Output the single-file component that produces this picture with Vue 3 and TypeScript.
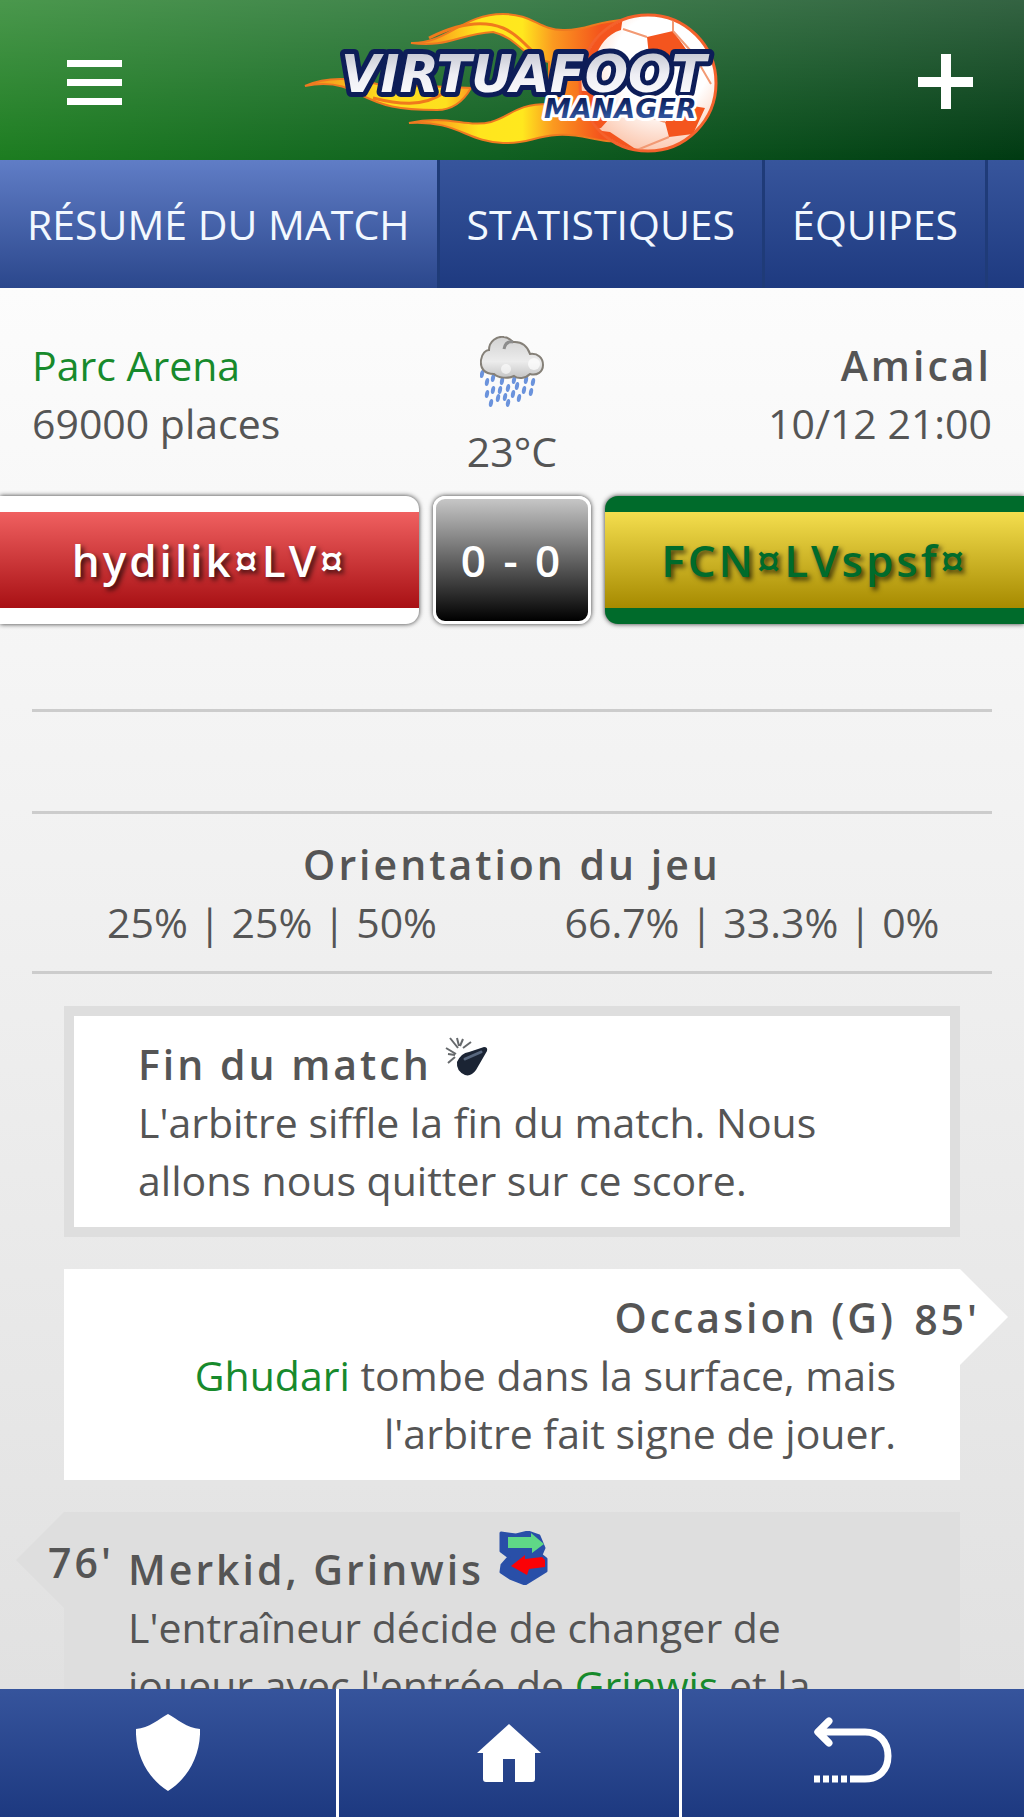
<script setup lang="ts">
interface Tab {
  label: string
  active: boolean
}

const tabs: Tab[] = [
  { label: 'RÉSUMÉ DU MATCH', active: true },
  { label: 'STATISTIQUES', active: false },
  { label: 'ÉQUIPES', active: false },
]

const orientation: string[] = ['25% | 25% | 50%', '66.7% | 33.3% | 0%']

const drops: [number, number][] = [
  [2, 38], [7, 46], [13, 42], [22, 45], [34, 44], [46, 44], [53, 46],
  [13, 54], [20, 54], [28, 52], [37, 50], [44, 54], [51, 56], [7, 58],
  [18, 62], [25, 61], [33, 58], [39, 62], [11, 67], [28, 67],
]
</script>

<template>
  <div class="app">
    <header class="topbar">
      <button class="icon-button menu" type="button" aria-label="Menu">
        <svg width="56" height="56" viewBox="0 0 56 56" fill="#fff">
          <path d="M0 6h55v7H0zM0 25h55v7H0zM0 44h55v7H0z" />
        </svg>
      </button>
      <svg class="logo" width="450" height="160" viewBox="-3 0 450 160" role="img" aria-label="Virtuafoot Manager">
        <defs>
          <linearGradient id="flame" x1="0" x2="1">
            <stop offset="0" stop-color="#f08a1c" />
            <stop offset=".15" stop-color="#fba81c" />
            <stop offset=".32" stop-color="#ffe51e" />
            <stop offset=".52" stop-color="#ffe81e" />
            <stop offset=".66" stop-color="#fb9a20" />
            <stop offset=".88" stop-color="#f4541c" />
          </linearGradient>
          <linearGradient id="tail" x1="0" x2="1">
            <stop offset="0" stop-color="#f08a1c" />
            <stop offset=".45" stop-color="#ffdc1e" />
            <stop offset=".85" stop-color="#fde01e" />
            <stop offset="1" stop-color="#fb9a20" />
          </linearGradient>
          <linearGradient id="steel" x1="0" y1="0" x2="0" y2="1">
            <stop offset="0" stop-color="#b9bcc8" />
            <stop offset=".5" stop-color="#eeeef4" />
            <stop offset="1" stop-color="#fff" />
          </linearGradient>
          <linearGradient id="navy" x1="0" y1="0" x2="0" y2="1">
            <stop offset=".2" stop-color="#0c1f5c" />
            <stop offset="1" stop-color="#3d68b4" />
          </linearGradient>
          <radialGradient id="ball" cx=".6" cy=".35" r=".7">
            <stop offset=".5" stop-color="#fff" />
            <stop offset="1" stop-color="#fbc0a4" />
          </radialGradient>
          <clipPath id="ballClip"><circle cx="358" cy="83" r="67" /></clipPath>
        </defs>
        <g stroke="#ee7a20" stroke-width="2">
          <path d="M121 43C157 44 172 14 213 14C243 14 249 30 273 30C299 31 305 20 337 20L337 140C307 145 297 133 267 135C242 137 237 144 213 143C177 142 167 120 119 123C157 114 177 128 201 122C222 116 225 104 259 104L259 62C232 58 229 38 203 32C169 34 157 48 121 43Z" fill="url(#flame)" />
          <path d="M15 86C37 76 63 78 87 84L181 88C173 102 163 110 147 110C107 110 93 106 69 94C53 84 35 82 15 86Z" fill="url(#tail)" />
          <path d="M190 58H202L198 76H184Z" fill="#fdb81e" />
        </g>
        <path d="M139 38C167 24 193 20 213 28C233 36 237 52 253 56M83 98C107 104 133 108 155 92" fill="none" stroke="#f07a1c" stroke-width="3" />
        <circle cx="358" cy="83" r="68" fill="url(#ball)" stroke="#f4622c" stroke-width="3" />
        <g clip-path="url(#ballClip)">
          <path d="M287 26C303 20 317 18 333 16L331 30C317 34 309 46 305 58L280 60ZM357 37L383 31L401 56L359 56ZM281 90L309 92L319 119L311 128L277 132ZM375 122L397 105L415 108L403 134L379 137ZM290 128L320 132L347 150L330 156Z" fill="#f4551e" />
          <path d="M333 29L357 37M383 31V20M383 31L409 60M359 56L347 70M319 119Q347 110 375 122M379 137L347 150M407 60L421 84" fill="none" stroke="#f29a74" stroke-width="2" />
        </g>
        <g font-family="'DejaVu Sans', sans-serif" font-weight="700" font-style="italic" stroke-linejoin="round" paint-order="stroke">
          <text x="51" y="92" font-size="51" fill="url(#steel)" stroke="#0d1d58" stroke-width="10">VIRTUAFOOT</text>
          <text x="254" y="118" font-size="27" fill="url(#navy)" stroke="#fff" stroke-width="6">MANAGER</text>
        </g>
      </svg>
      <button class="icon-button plus" type="button" aria-label="Ajouter">
        <svg width="56" height="56" viewBox="0 0 56 56" fill="#fff">
          <path d="M23 0h10v23h22v10H33v22H23V33H0V23h23z" />
        </svg>
      </button>
    </header>

    <nav class="tabs" aria-label="Match">
      <a v-for="tab in tabs" :key="tab.label" href="#" class="tab" :class="{ active: tab.active }">{{ tab.label }}</a>
    </nav>

    <main class="content">
      <section class="info">
        <div>
          <a href="#">Parc Arena</a>
          <div>69000 places</div>
        </div>
        <div class="weather">
          <svg width="64" height="76" viewBox="0 0 64 76" aria-hidden="true">
            <defs>
              <linearGradient id="cloud" x1="0" y1="0" x2="0" y2="1">
                <stop offset="0" stop-color="#d2d2d2" />
                <stop offset=".6" stop-color="#ececec" />
                <stop offset="1" stop-color="#c4c4c4" />
              </linearGradient>
            </defs>
            <ellipse v-for="([x, y], i) in drops" :key="i" :cx="x" :cy="y" rx="2" ry="4" fill="#6b93dc" :transform="`rotate(12 ${x} ${y})`" />
            <path d="M14 38C4 38 0 32 1 24C2 17 6 14 9 14C9 5 17 0 24 1C28 1 31 4 33 6C42 5 48 11 50 18C58 17 63 22 63 29C63 36 57 40 50 38C45 43 38 43 34 40C28 43 18 42 14 38Z" fill="url(#cloud)" stroke="#858078" stroke-width="2" />
            <path d="M24 13C25 8 28 5 33 6" fill="none" stroke="#8d8d8d" stroke-width="3" />
            <circle cx="54" cy="28" r="6" fill="#fff" opacity=".7" />
            <circle cx="26" cy="33" r="5" fill="#fff" opacity=".6" />
          </svg>
          <div>23°C</div>
        </div>
        <div class="right">
          <h3>Amical</h3>
          <div>10/12 21:00</div>
        </div>
      </section>

      <section class="scoreboard">
        <div class="team home"><span>hydilik¤LV¤</span></div>
        <div class="score">0 - 0</div>
        <div class="team away"><span>FCN¤LVspsf¤</span></div>
      </section>

      <section class="panel scorers"></section>
      <section class="panel bookings"></section>
      <section class="panel orientation">
        <h3>Orientation du jeu</h3>
        <div class="halves">
          <span v-for="value in orientation" :key="value">{{ value }}</span>
        </div>
      </section>

      <section class="feed">
        <article class="event framed">
          <h3>Fin du match
            <svg width="44" height="45" viewBox="0 0 44 45" aria-hidden="true">
              <path d="M12 27Q16 18 24 17L39 12Q43 12 42 16L31 35Q26 42 20 40Q11 36 12 27Z" fill="#1b2434" />
              <path d="M20 24L36 17" stroke="#58677e" stroke-width="3" stroke-linecap="round" />
              <path d="M5 3L13 13M12 3L14 11M18 4L15 11M26 7L18 13M1 13L11 19M3 19L10 20M3 28L10 22" stroke="#66696c" stroke-width="2" fill="none" />
            </svg>
          </h3>
          <p>L'arbitre siffle la fin du match. Nous allons nous quitter sur ce score.</p>
        </article>

        <article class="event away-event">
          <span class="minute">85'</span>
          <h3>Occasion (G)</h3>
          <p><a href="#">Ghudari</a> tombe dans la surface, mais l'arbitre fait signe de jouer.</p>
        </article>

        <article class="event home-event">
          <span class="minute">76'</span>
          <h3>Merkid, Grinwis
            <svg width="50" height="54" viewBox="0 0 50 54" aria-hidden="true">
              <path d="M3 2L18 4L30 1L41 5L46 17L43 24L48 28V40L40 45L27 53L12 47L3 41L4 34L11 26L3 20Z" fill="#294fa8" stroke="#294fa8" stroke-width="3" stroke-linejoin="round" />
              <path d="M10 6H33V2L46 13L34 22V17H10Z" fill="#5fd887" />
              <path d="M13 35L27 24V28L44 26L47 29V36L31 38L29 44Z" fill="#fb0207" />
            </svg>
          </h3>
          <p>L'entraîneur décide de changer de joueur avec l'entrée de <a href="#">Grinwis</a> et la</p>
        </article>
      </section>
    </main>

    <footer class="bottombar">
      <a href="#" aria-label="Club">
        <svg width="64" height="78" viewBox="0 0 64 78" fill="#fff">
          <path d="M32 0C41 5 51 14 64 15C65 43 50 66 32 77C14 66-1 43 0 15C13 14 23 5 32 0Z" />
        </svg>
      </a>
      <a href="#" aria-label="Accueil">
        <svg width="64" height="58" viewBox="0 0 64 58" fill="#fff">
          <path d="M32 0L64 29H58V55Q58 58 55 58H38V35H26V58H9Q6 58 6 55V29H0Z" />
        </svg>
      </a>
      <a href="#" aria-label="Retour">
        <svg width="78" height="72" viewBox="0 0 78 72" fill="none" stroke="#fff" stroke-width="7">
          <path d="M15 4L4 15L15 26M4 15H51C65 15 74 25 74 39S65 62 51 62H36" stroke-linejoin="round" />
          <path d="M15 4L4 15L15 26" stroke-linecap="round" stroke-linejoin="round" />
          <path d="M0 62H36" stroke-dasharray="6 3" />
        </svg>
      </a>
    </footer>
  </div>
</template>

<style>
body {
  margin: 0;
}
</style>

<style scoped>
* {
  box-sizing: border-box;
}

.app {
  display: flex;
  flex-direction: column;
  height: 100vh;
  overflow: hidden;
  font: 400 41px/58px "Open Sans", "Noto Sans", sans-serif;
  color: #555;
}

a {
  color: #178a2c;
  text-decoration: none;
}

h3,
p {
  margin: 0;
}

h3 {
  font-size: 41px;
  font-weight: 600;
  line-height: 58px;
  letter-spacing: 3px;
}

.topbar {
  display: grid;
  flex: none;
  grid-template-columns: 1fr auto 1fr;
  align-items: center;
  height: 160px;
  background:
    linear-gradient(rgba(255, 255, 255, 0.2), rgba(255, 255, 255, 0)),
    linear-gradient(100deg, #1d7e20, #0f5f20 50%, #003a12);
}

.icon-button {
  padding: 20px 16px 16px;
  border: 0;
  background: none;
  line-height: 0;
}

.menu {
  justify-self: start;
  margin-left: 51px;
}

.plus {
  justify-self: end;
  margin-right: 34px;
}

.tabs {
  display: flex;
  flex: none;
  height: 128px;
  overflow: hidden;
  background: linear-gradient(#37559c, #1e3a80);
}

.tab {
  flex: none;
  padding: 0 27px;
  border-right: 3px solid #1f3b78;
  line-height: 128px;
  color: #f2f8ff;
}

.tab.active {
  background: linear-gradient(#607dc6, #2b478c);
}

.content {
  flex: 1;
  min-height: 0;
  padding-top: 48px;
  overflow: hidden;
  background: linear-gradient(#fcfcfc, #e1e1e1);
}

.info {
  display: grid;
  grid-template-columns: 1fr auto 1fr;
  padding: 0 32px 16px;
}

.weather {
  text-align: center;
}

.weather svg {
  display: block;
  margin: 0 auto 10px;
}

.right {
  text-align: right;
}

.scoreboard {
  display: grid;
  grid-template-columns: 1fr 158px 1fr;
  gap: 14px;
  font-size: 44px;
  font-weight: 600;
  letter-spacing: 3px;
  text-align: center;
}

.team {
  padding: 16px 0;
  box-shadow: 0 0 5px rgba(0, 0, 0, 0.8);
}

.team span {
  display: block;
  line-height: 96px;
  text-shadow: 3px 3px 5px rgba(0, 0, 0, 0.7);
}

.home {
  border-radius: 0 13px 13px 0;
  background: #fff;
  color: #fff;
}

.home span {
  background: linear-gradient(#f06060, #a81014);
}

.away {
  border-radius: 13px 0 0 13px;
  background: #006b2b;
  color: #006b2b;
}

.away span {
  background: linear-gradient(#f4de4e, #a68a00);
}

.score {
  border: 3px solid #fff;
  border-radius: 12px;
  background: linear-gradient(#c6c6c6, #000);
  box-shadow: 0 0 5px rgba(0, 0, 0, 0.8);
  color: #fff;
  line-height: 122px;
}

.panel {
  margin: 0 32px;
  border-bottom: 3px solid #ccc;
}

.scorers {
  height: 88px;
}

.bookings {
  height: 102px;
}

.orientation {
  padding: 21px 0 20px;
  text-align: center;
}

.halves {
  display: grid;
  grid-template-columns: 1fr 1fr;
}

.feed {
  display: flex;
  flex-direction: column;
  gap: 32px;
  padding: 32px 64px;
}

.event {
  position: relative;
  padding: 19px 64px 18px;
}

.framed {
  border: 10px solid #dedede;
  background: #fff;
}

.away-event {
  background: #fff;
  text-align: right;
}

.home-event {
  background: #dedede;
}

.event::before {
  position: absolute;
  top: 0;
  border: solid transparent;
}

.away-event::before {
  left: 100%;
  border-width: 48px 0 48px 48px;
  border-left-color: #fff;
  content: "";
}

.home-event::before {
  right: 100%;
  border-width: 48px 48px 48px 0;
  border-right-color: #dedede;
  content: "";
}

.minute {
  position: absolute;
  top: 21px;
  font-weight: 600;
  letter-spacing: 3px;
}

.away-event .minute {
  right: -20px;
}

.home-event .minute {
  left: -16px;
}

.bottombar {
  display: grid;
  flex: none;
  grid-template-columns: 339fr 343fr 342fr;
  height: 128px;
  background: linear-gradient(#36549c, #1d3980);
}

.bottombar a {
  display: flex;
  align-items: center;
  justify-content: center;
  border-right: 3px solid #fff;
}

.bottombar a:last-child {
  border-right: 0;
}
</style>
